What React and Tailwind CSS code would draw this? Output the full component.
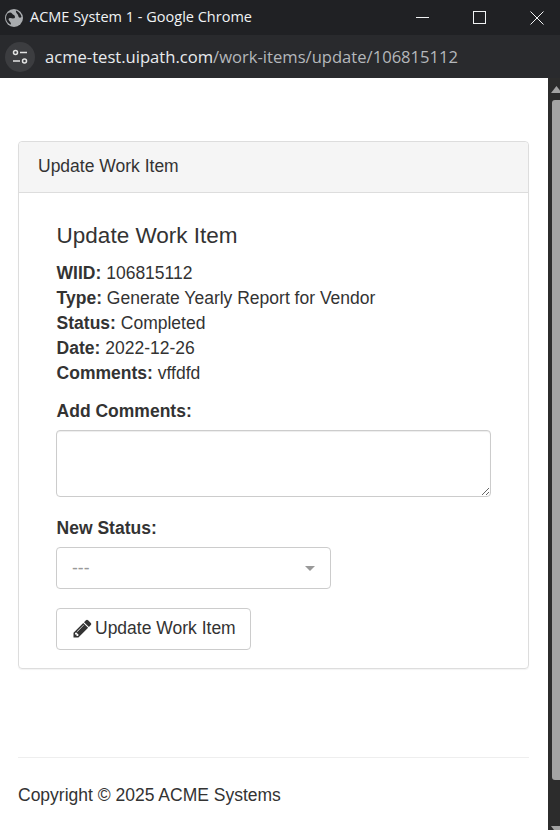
const details = [
  ['WIID:', '106815112'],
  ['Type:', 'Generate Yearly Report for Vendor'],
  ['Status:', 'Completed'],
  ['Date:', '2022-12-26'],
  ['Comments:', 'vffdfd'],
];

function TitleBar() {
  return (
    <div className="h-[35px] bg-[#202124] flex items-center text-[#f1f3f4] text-[14.5px] font-['Open_Sans','Noto_Sans',sans-serif]">
      <svg className="ml-[5px] w-[18px] h-[18px]" viewBox="0 0 18 18">
        <circle cx="9" cy="9" r="9" fill="#a9acaf" />
        <path d="M2.5 4.5C4 3.5 6 3 7 4.5s3 1.5 3 3.5-3 1.5-4.5 1-2.5 1-1.5 2.5 2 2 2 4C3.5 15 1 12 1 9c0-1.5.5-3.2 1.500-4.500zM11 1.500c2.500.8 5 3.500 5.500 6.500-1.500 1.500-3 .5-3.200-1.200S10.500 4 11 1.500z" fill="#202124" />
      </svg>
      <span className="ml-[7px] flex-1 -translate-y-px">ACME System 1 - Google Chrome</span>
      <div className="flex items-center">
        <div className="w-[13px] h-px bg-[#f1f3f4] mr-[44px]"></div>
        <div className="w-[13px] h-[13px] border border-[#f1f3f4] mr-[44px]"></div>
        <svg className="w-[14px] h-[14px] mr-[16px]" viewBox="0 0 14 14">
          <path d="M0.5 0.5L13.5 13.5M13.5 0.5L0.5 13.5" stroke="#f1f3f4" strokeWidth="1" />
        </svg>
      </div>
    </div>
  );
}

function AddressBar() {
  return (
    <div className="h-[43px] bg-[#292a2d] flex items-center text-[16.6px] font-['Open_Sans','Noto_Sans',sans-serif]">
      <div className="ml-[5px] w-[30px] h-[30px] rounded-full bg-[#3c3d40] flex items-center justify-center">
        <svg className="w-[16px] h-[16px]" viewBox="0 0 16 16" fill="none" stroke="#e3e3e3" strokeWidth="1.5">
          <circle cx="3.500" cy="3.500" r="2" />
          <path d="M8 3.500H15M1 12H8" />
          <circle cx="12.500" cy="12" r="2" />
        </svg>
      </div>
      <span className="ml-[10px] text-[#e8eaed]">acme-test.uipath.com<span className="text-[#b4b7bb]">/work-items/update/106815112</span></span>
    </div>
  );
}

function Scrollbar() {
  return (
    <div className="w-[12px] shrink-0 bg-[#2c2c2c] flex flex-col">
      <svg className="w-[12px] h-[7px] mt-[8px] shrink-0" viewBox="0 0 12 7">
        <path d="M3 7L8.500 0L12 4.400V7z" fill="#a3a3a3" />
      </svg>
      <div className="w-[8px] ml-[4px] mt-[7px] h-[680px] bg-[#a3a3a3] rounded-l-[3px]"></div>
      <svg className="w-[12px] h-[4px] mt-[46px] shrink-0" viewBox="0 0 12 4">
        <path d="M3 0H12V4H6z" fill="#a3a3a3" />
      </svg>
    </div>
  );
}

function App() {
  return (
    <div className="w-[560px] h-[830px] overflow-hidden flex flex-col bg-white font-['Liberation_Sans',Arial,sans-serif] text-[#333] text-[17.5px] leading-[25px]">
      <TitleBar />
      <AddressBar />
      <div className="flex flex-1 min-h-0">
        <div className="flex-1 pl-[18px] pr-[19px] pt-[63px]">
          <div className="border border-[#ddd] rounded-[4px] shadow-[0_1px_1px_rgba(0,0,0,0.05)]">
            <div className="h-[51px] bg-[#f5f5f5] border-b border-[#ddd] rounded-t-[4px] px-[19px] pb-[2px] flex items-center">
              Update Work Item
            </div>
            <div className="pl-[37px] pr-[37px] pt-[28px] pb-[18px]">
              <h3 className="text-[22.5px] leading-[30px] mb-[10px] pl-[0.6px]">Update Work Item</h3>
              {details.map(([label, value]) => (
                <div key={label} className="pl-[0.6px]">
                  <b>{label}</b> {value}
                </div>
              ))}
              <label className="block font-bold mt-[13px] mb-[6px] pl-[0.6px]">Add Comments:</label>
              <textarea className="block w-full h-[67px] border border-[#ccc] rounded-[4px] shadow-[inset_0_1px_1px_rgba(0,0,0,0.075)] outline-none"></textarea>
              <label className="block font-bold mt-[19px] mb-[6px] pl-[0.6px]">New Status:</label>
              <div className="w-[275px] h-[42px] border border-[#ccc] rounded-[4px] flex items-center justify-between pl-[15px] pr-[15px] text-[#999]">
                <span>---</span>
                <div className="w-0 h-0 border-x-[5px] border-x-transparent border-t-[5px] border-t-[#999]"></div>
              </div>
              <button className="mt-[19px] h-[42px] pl-[15px] pr-[14px] pb-[2px] border border-[#ccc] rounded-[4px] bg-white flex items-center gap-[2px]">
                <svg className="w-[21px] h-[21px]" viewBox="0 0 1792 1792" fill="currentColor">
                  <path d="M491 1536l91-91-235-235-91 91v107h128v128h107zm523-928q0-22-22-22-10 0-17 7l-542 542q-7 7-7 17 0 22 22 22 10 0 17-7l542-542q7-7 7-17zm-54-192l416 416-832 832h-416v-416zm683 96q0 53-37 90l-166 166-416-416 166-165q36-38 90-38 53 0 91 38l235 234q37 39 37 91z" />
                </svg>
                Update Work Item
              </button>
            </div>
          </div>
          <div className="mt-[88px] border-t border-[#eee] pt-[25px]">Copyright © 2025 ACME Systems</div>
        </div>
        <Scrollbar />
      </div>
    </div>
  );
}

export default App;
